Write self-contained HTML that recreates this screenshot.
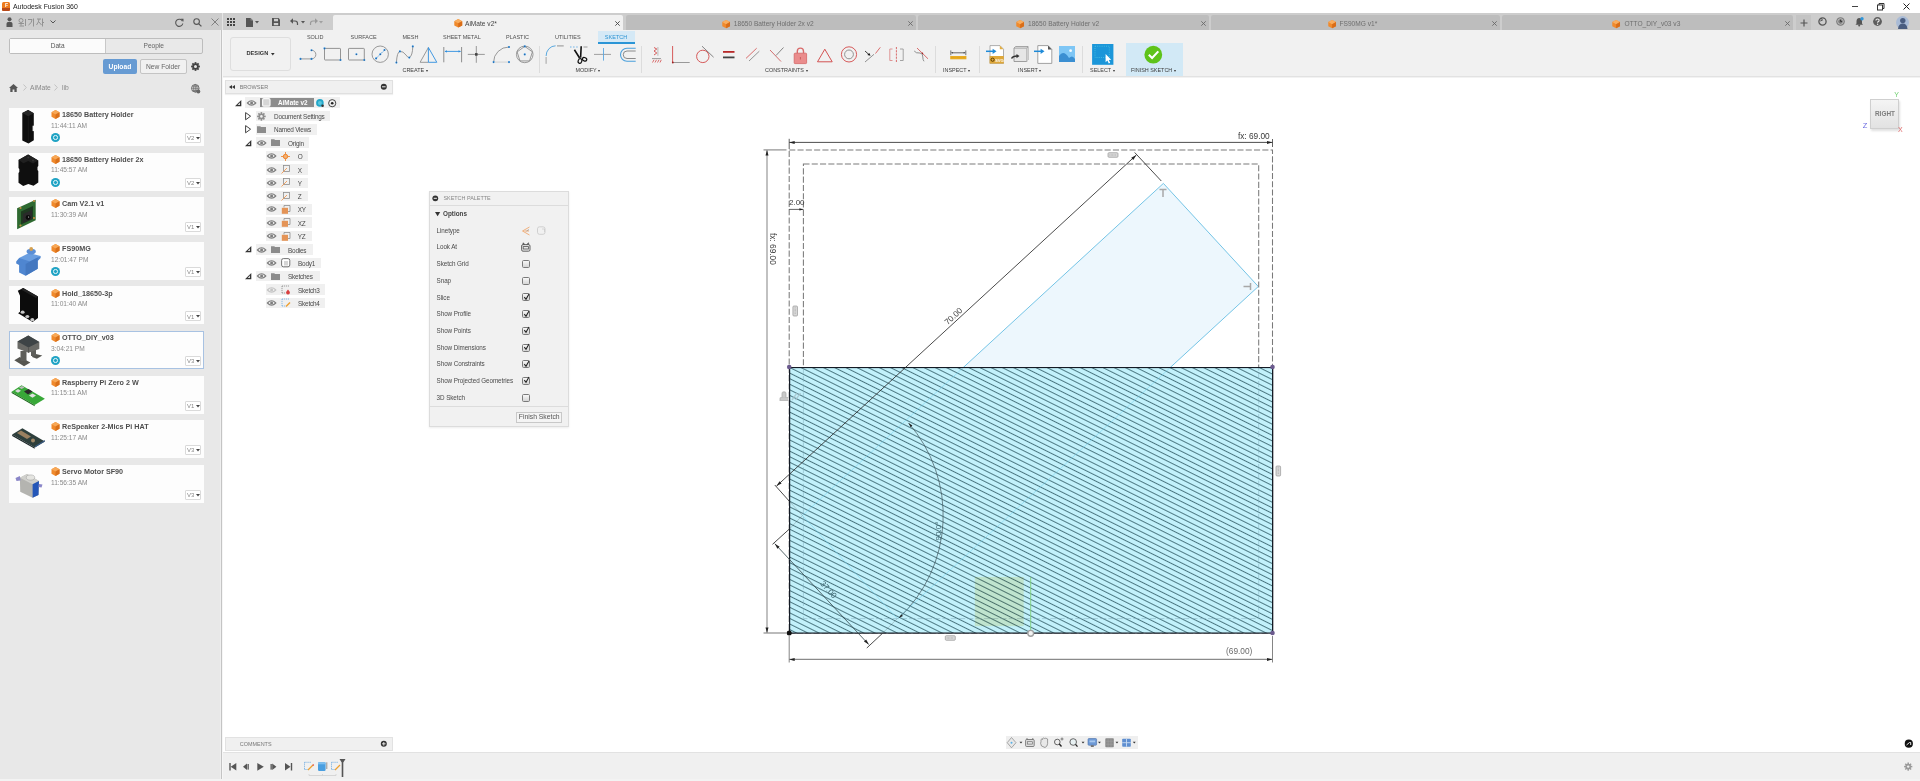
<!DOCTYPE html>
<html><head><meta charset="utf-8">
<style>
*{margin:0;padding:0;box-sizing:border-box}
html,body{width:1920px;height:781px;overflow:hidden;background:#fff;font-family:"Liberation Sans",sans-serif;color:#333}
.a{position:absolute}
.t{position:absolute;white-space:nowrap;line-height:1}
svg{position:absolute;overflow:visible}
</style></head><body>

<!-- title -->

<div class="a" style="left:0;top:0;width:1920px;height:13px;background:#fff"></div>
<div class="a" style="left:2px;top:2px;width:8px;height:9px;background:#ec7a1e;border-radius:1.5px"></div>
<div class="a" style="left:2px;top:8px;width:8px;height:3px;background:#b5481a;border-radius:0 0 1.5px 1.5px"></div>
<div class="t" style="left:5px;top:2.5px;font-size:5px;font-weight:700;color:#fff">F</div>
<div class="t" style="left:13px;top:3.8px;font-size:6.9px;color:#222">Autodesk Fusion 360</div>
<div class="a" style="left:1852px;top:5.5px;width:6px;height:1px;background:#444"></div>
<svg style="left:1877px;top:2.5px" width="8" height="8"><rect x="0.5" y="2" width="5" height="5" fill="none" stroke="#333" stroke-width="1"/><path d="M2,2 V0.5 H7 V5.5 H5.5" fill="none" stroke="#333" stroke-width="1"/></svg>
<svg style="left:1903px;top:2.5px" width="7" height="7"><path d="M0.5,0.5 L6.5,6.5 M6.5,0.5 L0.5,6.5" stroke="#222" stroke-width="1"/></svg>
<!-- header strip -->
<div class="a" style="left:0;top:13px;width:1920px;height:17px;background:#cdcdcd"></div>
<div class="a" style="left:0;top:30px;width:221px;height:751px;background:#e8e8e8"></div><div class="a" style="left:220px;top:30px;width:1px;height:749px;background:#efefef"></div>
<div class="a" style="left:221px;top:30px;width:1px;height:749px;background:#c4c4c4"></div><div class="a" style="left:222px;top:30px;width:1px;height:749px;background:#f6f6f6"></div>
<div class="a" style="left:223px;top:30px;width:1697px;height:46px;background:#f1f1f1"></div>
<div class="a" style="left:223px;top:76px;width:1697px;height:1px;background:#e2e2e2"></div><div class="a" style="left:223px;top:77px;width:1697px;height:1px;background:#f2f2f2"></div>
<div class="a" style="left:223px;top:752px;width:1697px;height:1px;background:#e2e2e2"></div>
<div class="a" style="left:223px;top:753px;width:1697px;height:28px;background:#f0f0f0"></div>

<!-- left -->

<!-- user -->
<svg style="left:6px;top:17px" width="7" height="10"><circle cx="3.5" cy="2.3" r="2" fill="#555"/><path d="M0.5,10 V7 Q0.5,4.8 3.5,4.8 Q6.5,4.8 6.5,7 V10 Z" fill="#555"/></svg>
<svg style="left:18px;top:17.5px" width="26" height="9" fill="none" stroke="#8c8c8c" stroke-width="0.9">
<circle cx="3" cy="2.5" r="2"/><path d="M0.5,5.5 H6 M3,5.5 V7.5 M1.5,8 H6"/><path d="M7.5,1 V8"/>
<path d="M10,1.5 H14 Q14,5 10.5,7 M15.5,0.5 V8.5"/>
<path d="M19,1 H23 M21,1 Q21,4 18.5,7 M21,4 L23.5,7 M24.5,0.5 V8.5 M24.5,4.5 H26"/>
</svg>
<svg style="left:49.5px;top:20px" width="6" height="4"><path d="M0.5,0.5 L3,3 L5.5,0.5" fill="none" stroke="#555" stroke-width="1"/></svg>
<svg style="left:175px;top:17.5px" width="9" height="9"><path d="M7.5,3.2 A3.6,3.6 0 1 0 7.8,5.5" fill="none" stroke="#555" stroke-width="1.1"/><polygon points="5.5,0.8 8.5,0.8 8.5,3.8" fill="#555"/></svg>
<svg style="left:193px;top:17.5px" width="9" height="9"><circle cx="3.6" cy="3.6" r="2.8" fill="none" stroke="#555" stroke-width="1.1"/><path d="M5.6,5.6 L8.4,8.4" stroke="#555" stroke-width="1.3"/></svg>
<svg style="left:211px;top:18px" width="8" height="8"><path d="M0.5,0.5 L7.5,7.5 M7.5,0.5 L0.5,7.5" stroke="#777" stroke-width="0.9"/></svg>

<!-- data/people -->
<div class="a" style="left:9px;top:38px;width:194px;height:15.5px;border:1px solid #bdbdbd;border-radius:2px;background:#e9e9e9"></div>
<div class="a" style="left:10px;top:39px;width:95.5px;height:13.5px;background:#fbfbfb;border-right:1px solid #c8c8c8"></div>
<div class="t" style="left:50.8px;top:43.3px;font-size:6.5px;color:#555">Data</div>
<div class="t" style="left:143.5px;top:43.3px;font-size:6.6px;color:#666">People</div>

<!-- buttons -->
<div class="a" style="left:102.5px;top:58.5px;width:34px;height:15.5px;background:#679bd3;border-radius:2px"></div>
<div class="t" style="left:108.6px;top:64px;font-size:6.7px;font-weight:700;color:#fff">Upload</div>
<div class="a" style="left:140px;top:58.5px;width:46.5px;height:15.5px;background:#f1f1f1;border:1px solid #c4c4c4;border-radius:2px"></div>
<div class="t" style="left:146px;top:64px;font-size:6.7px;color:#666">New Folder</div>
<svg style="left:190.5px;top:61.5px" width="9" height="9"><g transform="translate(4.5 4.5)"><circle r="3.2" fill="#444"/><g fill="#444"><rect x="-0.9" y="-4.4" width="1.8" height="8.8"/><rect x="-0.9" y="-4.4" width="1.8" height="8.8" transform="rotate(45)"/><rect x="-0.9" y="-4.4" width="1.8" height="8.8" transform="rotate(90)"/><rect x="-0.9" y="-4.4" width="1.8" height="8.8" transform="rotate(135)"/></g><circle r="1.5" fill="#e6e6e6"/></g></svg>

<!-- breadcrumb -->
<svg style="left:9px;top:83.5px" width="9" height="8"><polygon points="4.5,0 9,4 7.7,4 7.7,8 5.4,8 5.4,5.5 3.6,5.5 3.6,8 1.3,8 1.3,4 0,4" fill="#555"/></svg>
<svg style="left:23px;top:84px" width="4" height="7"><path d="M0.5,0.5 L3.3,3.5 L0.5,6.5" fill="none" stroke="#bdbdbd" stroke-width="0.9"/></svg>
<div class="t" style="left:30px;top:85.1px;font-size:6.7px;color:#888">AiMate</div>
<svg style="left:54px;top:84px" width="4" height="7"><path d="M0.5,0.5 L3.3,3.5 L0.5,6.5" fill="none" stroke="#bdbdbd" stroke-width="0.9"/></svg>
<div class="t" style="left:62px;top:85.1px;font-size:6.7px;color:#888">lib</div>
<svg style="left:191px;top:83.5px" width="10" height="10"><circle cx="4.3" cy="4.3" r="3.8" fill="none" stroke="#666" stroke-width="0.9"/><path d="M0.5,4.3 H8.1 M4.3,0.5 V8.1 M1.3,2.2 H7.3 M1.3,6.4 H7.3" stroke="#666" stroke-width="0.7" fill="none"/><ellipse cx="4.3" cy="4.3" rx="1.8" ry="3.8" fill="none" stroke="#666" stroke-width="0.7"/><circle cx="7.3" cy="7.5" r="2" fill="#666"/></svg>

<!-- cards -->
<div class="a" style="left:9px;top:107.9px;width:195px;height:38px;background:#fdfdfd;"></div>
<svg style="left:9px;top:107.9px" width="40" height="38"><polygon points="19.1,1.9 24.8,5.2 24.8,32.2 19.5,35.6 13.3,32.4 13.3,5.1" fill="#0e0e0e"/><polygon points="19.1,1.9 24.8,5.2 19.3,8.3 13.3,5.1" fill="#262626"/><rect x="23.6" y="17.7" width="1.4" height="5.4" fill="#f4f4f4"/><path d="M19.3,8.3 V35" stroke="#1c1c1c" stroke-width="0.8"/></svg>
<svg style="left:50.5px;top:110.2px" width="9" height="9"><polygon points="4.5,0 8.5,2.2 8.5,6.8 4.5,9 0.5,6.8 0.5,2.2" fill="#f08a2c"/><polygon points="0.5,2.2 4.5,4.4 8.5,2.2 4.5,0" fill="#f7a857"/><polygon points="4.5,4.4 8.5,2.2 8.5,6.8 4.5,9" fill="#d9701a"/></svg>
<div class="t" style="left:62px;top:111.1px;font-size:7.2px;font-weight:700;color:#4e4e4e">18650 Battery Holder</div>
<div class="t" style="left:51px;top:122.8px;font-size:6.6px;color:#8a8a8a">11:44:11 AM</div>
<div class="a" style="left:50.6px;top:133.2px;width:9.2px;height:9.2px;border-radius:50%;background:#1fa3c4"></div>
<div class="a" style="left:53px;top:135.4px;width:4.5px;height:4.5px;border:1px solid #e8f7fb;border-radius:50%"></div>
<div class="a" style="left:185px;top:132.9px;width:16px;height:10px;background:#fff;border:1px solid #dadada;border-radius:1px"></div>
<div class="t" style="left:187px;top:135.1px;font-size:6px;color:#888">V2</div>
<svg style="left:196px;top:136.9px" width="4" height="3"><polygon points="0,0 4,0 2,2.5" fill="#444"/></svg>
<div class="a" style="left:9px;top:152.5px;width:195px;height:38px;background:#fdfdfd;"></div>
<svg style="left:9px;top:152.5px" width="40" height="38"><polygon points="19.1,1.5 29.3,7.5 29.3,13 28.5,14 28.5,17 29.3,18 29.3,29.5 24.5,32.8 19.3,31 14.2,33 9.5,29.8 9.5,20 10.3,19 10.3,16 9.5,15 9.5,7.1" fill="#0f0f0f"/><polygon points="19.1,1.5 29.3,7.5 24,10.5 19.2,8 14.5,10.3 9.5,7.1" fill="#202020"/><circle cx="19.3" cy="4.5" r="1" fill="#333"/><circle cx="24" cy="7.5" r="1" fill="#333"/></svg>
<svg style="left:50.5px;top:154.8px" width="9" height="9"><polygon points="4.5,0 8.5,2.2 8.5,6.8 4.5,9 0.5,6.8 0.5,2.2" fill="#f08a2c"/><polygon points="0.5,2.2 4.5,4.4 8.5,2.2 4.5,0" fill="#f7a857"/><polygon points="4.5,4.4 8.5,2.2 8.5,6.8 4.5,9" fill="#d9701a"/></svg>
<div class="t" style="left:62px;top:155.7px;font-size:7.2px;font-weight:700;color:#4e4e4e">18650 Battery Holder 2x</div>
<div class="t" style="left:51px;top:167.4px;font-size:6.6px;color:#8a8a8a">11:45:57 AM</div>
<div class="a" style="left:50.6px;top:177.8px;width:9.2px;height:9.2px;border-radius:50%;background:#1fa3c4"></div>
<div class="a" style="left:53px;top:180.0px;width:4.5px;height:4.5px;border:1px solid #e8f7fb;border-radius:50%"></div>
<div class="a" style="left:185px;top:177.5px;width:16px;height:10px;background:#fff;border:1px solid #dadada;border-radius:1px"></div>
<div class="t" style="left:187px;top:179.7px;font-size:6px;color:#888">V2</div>
<svg style="left:196px;top:181.5px" width="4" height="3"><polygon points="0,0 4,0 2,2.5" fill="#444"/></svg>
<div class="a" style="left:9px;top:197.1px;width:195px;height:38px;background:#fdfdfd;"></div>
<svg style="left:9px;top:197.1px" width="40" height="38"><polygon points="8.1,11.3 26.7,2.7 26.7,23.2 8.1,32.3" fill="#2f6a31"/><polygon points="12,14.5 24,9 24,22 12,27.5" fill="#1e3a20"/><polygon points="14,17 23,13 23,22 14,26" fill="#2a2a2a"/><circle cx="19.1" cy="20.5" r="2.4" fill="#0b0b0b"/><circle cx="19.6" cy="20" r="0.6" fill="#ddd"/><circle cx="11.5" cy="11" r="1.1" fill="#c09040"/><circle cx="25" cy="4" r="1.1" fill="#c09040"/><circle cx="25" cy="21" r="1.1" fill="#c09040"/><circle cx="11.5" cy="28.5" r="1.1" fill="#c09040"/></svg>
<svg style="left:50.5px;top:199.4px" width="9" height="9"><polygon points="4.5,0 8.5,2.2 8.5,6.8 4.5,9 0.5,6.8 0.5,2.2" fill="#f08a2c"/><polygon points="0.5,2.2 4.5,4.4 8.5,2.2 4.5,0" fill="#f7a857"/><polygon points="4.5,4.4 8.5,2.2 8.5,6.8 4.5,9" fill="#d9701a"/></svg>
<div class="t" style="left:62px;top:200.3px;font-size:7.2px;font-weight:700;color:#4e4e4e">Cam V2.1 v1</div>
<div class="t" style="left:51px;top:212.0px;font-size:6.6px;color:#8a8a8a">11:30:39 AM</div>
<div class="a" style="left:185px;top:222.1px;width:16px;height:10px;background:#fff;border:1px solid #dadada;border-radius:1px"></div>
<div class="t" style="left:187px;top:224.3px;font-size:6px;color:#888">V1</div>
<svg style="left:196px;top:226.1px" width="4" height="3"><polygon points="0,0 4,0 2,2.5" fill="#444"/></svg>
<div class="a" style="left:9px;top:241.7px;width:195px;height:38px;background:#fdfdfd;"></div>
<svg style="left:9px;top:241.7px" width="40" height="38"><polygon points="10.1,16 31.6,13.9 31.6,16 28.7,19 28.7,26.8 16.6,33.8 10.1,30.6 10.1,23 7.2,21.5 7.2,19.5" fill="#4f86d0"/><polygon points="10.1,16 20,11 31.6,13.9 21,19.5" fill="#6a9ee0"/><polygon points="21,19.5 28.7,15.5 28.7,26.8 16.6,33.8 16.6,22" fill="#4478c0"/><ellipse cx="22.2" cy="9.6" rx="4.6" ry="2.8" fill="#5b8fd6"/><circle cx="22.2" cy="7" r="1.9" fill="#d4a050"/></svg>
<svg style="left:50.5px;top:244.0px" width="9" height="9"><polygon points="4.5,0 8.5,2.2 8.5,6.8 4.5,9 0.5,6.8 0.5,2.2" fill="#f08a2c"/><polygon points="0.5,2.2 4.5,4.4 8.5,2.2 4.5,0" fill="#f7a857"/><polygon points="4.5,4.4 8.5,2.2 8.5,6.8 4.5,9" fill="#d9701a"/></svg>
<div class="t" style="left:62px;top:244.9px;font-size:7.2px;font-weight:700;color:#4e4e4e">FS90MG</div>
<div class="t" style="left:51px;top:256.6px;font-size:6.6px;color:#8a8a8a">12:01:47 PM</div>
<div class="a" style="left:50.6px;top:267.0px;width:9.2px;height:9.2px;border-radius:50%;background:#1fa3c4"></div>
<div class="a" style="left:53px;top:269.2px;width:4.5px;height:4.5px;border:1px solid #e8f7fb;border-radius:50%"></div>
<div class="a" style="left:185px;top:266.7px;width:16px;height:10px;background:#fff;border:1px solid #dadada;border-radius:1px"></div>
<div class="t" style="left:187px;top:268.9px;font-size:6px;color:#888">V1</div>
<svg style="left:196px;top:270.7px" width="4" height="3"><polygon points="0,0 4,0 2,2.5" fill="#444"/></svg>
<div class="a" style="left:9px;top:286.3px;width:195px;height:38px;background:#fdfdfd;"></div>
<svg style="left:9px;top:286.3px" width="40" height="38"><polygon points="14.2,2 29,10.6 29,32.1 23.6,35.9 9.1,27.3 11,25.7 11,9.7 8.8,4.7" fill="#0c0c0c"/><polygon points="14.2,2 29,10.6 27,12 12,3.5" fill="#222"/><ellipse cx="13.6" cy="26.2" rx="2" ry="1.6" fill="#c8c8c8"/><ellipse cx="18.3" cy="30.5" rx="2" ry="1.6" fill="#c8c8c8"/><ellipse cx="23.3" cy="33.7" rx="2" ry="1.6" fill="#c8c8c8"/></svg>
<svg style="left:50.5px;top:288.6px" width="9" height="9"><polygon points="4.5,0 8.5,2.2 8.5,6.8 4.5,9 0.5,6.8 0.5,2.2" fill="#f08a2c"/><polygon points="0.5,2.2 4.5,4.4 8.5,2.2 4.5,0" fill="#f7a857"/><polygon points="4.5,4.4 8.5,2.2 8.5,6.8 4.5,9" fill="#d9701a"/></svg>
<div class="t" style="left:62px;top:289.5px;font-size:7.2px;font-weight:700;color:#4e4e4e">Hold_18650-3p</div>
<div class="t" style="left:51px;top:301.2px;font-size:6.6px;color:#8a8a8a">11:01:40 AM</div>
<div class="a" style="left:185px;top:311.3px;width:16px;height:10px;background:#fff;border:1px solid #dadada;border-radius:1px"></div>
<div class="t" style="left:187px;top:313.5px;font-size:6px;color:#888">V1</div>
<svg style="left:196px;top:315.3px" width="4" height="3"><polygon points="0,0 4,0 2,2.5" fill="#444"/></svg>
<div class="a" style="left:9px;top:330.9px;width:195px;height:38px;background:#fdfdfd;border:1px solid #a8c2e2;"></div>
<svg style="left:9px;top:330.9px" width="40" height="38"><polygon points="5.3,29.3 10.7,26.1 21.4,31.4 15,35.2" fill="#555550"/><polygon points="23.6,22.3 33.3,24.4 27.9,27.7 23.1,26.1" fill="#555550"/><rect x="11.5" y="20" width="6" height="10" fill="#5e5e5a"/><rect x="22" y="18" width="5" height="7" fill="#5e5e5a"/><polygon points="19.3,4.6 30.3,11 30.3,18.1 19.5,21.8 8.5,17.5 8.5,10.5" fill="#6a6a66"/><polygon points="19.3,4.6 30.3,11 19.5,16.5 8.5,10.5" fill="#3e4446"/><path d="M19.5,16.5 V21.8" stroke="#4a4a48" stroke-width="0.7"/></svg>
<svg style="left:50.5px;top:333.2px" width="9" height="9"><polygon points="4.5,0 8.5,2.2 8.5,6.8 4.5,9 0.5,6.8 0.5,2.2" fill="#f08a2c"/><polygon points="0.5,2.2 4.5,4.4 8.5,2.2 4.5,0" fill="#f7a857"/><polygon points="4.5,4.4 8.5,2.2 8.5,6.8 4.5,9" fill="#d9701a"/></svg>
<div class="t" style="left:62px;top:334.1px;font-size:7.2px;font-weight:700;color:#4e4e4e">OTTO_DIY_v03</div>
<div class="t" style="left:51px;top:345.8px;font-size:6.6px;color:#8a8a8a">3:04:21 PM</div>
<div class="a" style="left:50.6px;top:356.2px;width:9.2px;height:9.2px;border-radius:50%;background:#1fa3c4"></div>
<div class="a" style="left:53px;top:358.4px;width:4.5px;height:4.5px;border:1px solid #e8f7fb;border-radius:50%"></div>
<div class="a" style="left:185px;top:355.9px;width:16px;height:10px;background:#fff;border:1px solid #dadada;border-radius:1px"></div>
<div class="t" style="left:187px;top:358.1px;font-size:6px;color:#888">V3</div>
<svg style="left:196px;top:359.9px" width="4" height="3"><polygon points="0,0 4,0 2,2.5" fill="#444"/></svg>
<div class="a" style="left:9px;top:375.5px;width:195px;height:38px;background:#fdfdfd;"></div>
<svg style="left:9px;top:375.5px" width="40" height="38"><polygon points="2.6,15.7 12.6,9.3 35.9,22.7 25.7,29.1" fill="#38a838"/><polygon points="2.6,15.7 25.7,29.1 25.7,30.3 2.6,16.9" fill="#1e6a1e"/><polygon points="15,15.5 19.5,13 23.5,15.5 19,18.5" fill="#2a2a2a"/><polygon points="20,19.5 23.5,17.5 27,19.5 23.5,21.7" fill="#e0e0e0"/><polygon points="6,15 9,13 12,14.8 9,16.8" fill="#d8d8d8"/><polygon points="10,11.5 13,10 15.5,11.5 12.5,13" fill="#bbb"/></svg>
<svg style="left:50.5px;top:377.8px" width="9" height="9"><polygon points="4.5,0 8.5,2.2 8.5,6.8 4.5,9 0.5,6.8 0.5,2.2" fill="#f08a2c"/><polygon points="0.5,2.2 4.5,4.4 8.5,2.2 4.5,0" fill="#f7a857"/><polygon points="4.5,4.4 8.5,2.2 8.5,6.8 4.5,9" fill="#d9701a"/></svg>
<div class="t" style="left:62px;top:378.7px;font-size:7.2px;font-weight:700;color:#4e4e4e">Raspberry Pi Zero 2 W</div>
<div class="t" style="left:51px;top:390.4px;font-size:6.6px;color:#8a8a8a">11:15:11 AM</div>
<div class="a" style="left:185px;top:400.5px;width:16px;height:10px;background:#fff;border:1px solid #dadada;border-radius:1px"></div>
<div class="t" style="left:187px;top:402.7px;font-size:6px;color:#888">V1</div>
<svg style="left:196px;top:404.5px" width="4" height="3"><polygon points="0,0 4,0 2,2.5" fill="#444"/></svg>
<div class="a" style="left:9px;top:420.1px;width:195px;height:38px;background:#fdfdfd;"></div>
<svg style="left:9px;top:420.1px" width="40" height="38"><polygon points="3.2,14.5 13.4,8.3 35.9,21.5 25.7,27.4" fill="#2e3f3c"/><polygon points="3.2,14.5 25.7,27.4 25.7,28.8 3.2,15.9" fill="#1a2628"/><polygon points="8,13 12,10.5 22,16.5 18,19" fill="#9a8060"/><circle cx="24" cy="20.5" r="2" fill="#a08868"/><polygon points="26,26 35.9,20 35.9,21.5 26,27.5" fill="#3a5a80"/></svg>
<svg style="left:50.5px;top:422.4px" width="9" height="9"><polygon points="4.5,0 8.5,2.2 8.5,6.8 4.5,9 0.5,6.8 0.5,2.2" fill="#f08a2c"/><polygon points="0.5,2.2 4.5,4.4 8.5,2.2 4.5,0" fill="#f7a857"/><polygon points="4.5,4.4 8.5,2.2 8.5,6.8 4.5,9" fill="#d9701a"/></svg>
<div class="t" style="left:62px;top:423.3px;font-size:7.2px;font-weight:700;color:#4e4e4e">ReSpeaker 2-Mics Pi HAT</div>
<div class="t" style="left:51px;top:435.0px;font-size:6.6px;color:#8a8a8a">11:25:17 AM</div>
<div class="a" style="left:185px;top:445.1px;width:16px;height:10px;background:#fff;border:1px solid #dadada;border-radius:1px"></div>
<div class="t" style="left:187px;top:447.3px;font-size:6px;color:#888">V3</div>
<svg style="left:196px;top:449.1px" width="4" height="3"><polygon points="0,0 4,0 2,2.5" fill="#444"/></svg>
<div class="a" style="left:9px;top:464.7px;width:195px;height:38px;background:#fdfdfd;"></div>
<svg style="left:9px;top:464.7px" width="40" height="38"><polygon points="10.9,12.8 18,9 30,16 29.5,30 23.6,32.7 11.2,26.8" fill="#b4b4b0"/><polygon points="10.9,12.8 18,9 30,16 23.6,19.2" fill="#d0d0cc"/><polygon points="23.6,19.2 30,16 29.5,30 23.6,32.7" fill="#2456b8"/><ellipse cx="21.5" cy="12.5" rx="4.2" ry="2.6" fill="#e4e4e0" stroke="#999" stroke-width="0.5"/><polygon points="6.5,13 10.9,11 11.5,15.5 7.5,16" fill="#8a86c8"/><polygon points="30,19 33.5,19.5 32.5,22.5 29.5,22" fill="#8a86c8"/></svg>
<svg style="left:50.5px;top:467.0px" width="9" height="9"><polygon points="4.5,0 8.5,2.2 8.5,6.8 4.5,9 0.5,6.8 0.5,2.2" fill="#f08a2c"/><polygon points="0.5,2.2 4.5,4.4 8.5,2.2 4.5,0" fill="#f7a857"/><polygon points="4.5,4.4 8.5,2.2 8.5,6.8 4.5,9" fill="#d9701a"/></svg>
<div class="t" style="left:62px;top:467.9px;font-size:7.2px;font-weight:700;color:#4e4e4e">Servo Motor SF90</div>
<div class="t" style="left:51px;top:479.6px;font-size:6.6px;color:#8a8a8a">11:56:35 AM</div>
<div class="a" style="left:185px;top:489.7px;width:16px;height:10px;background:#fff;border:1px solid #dadada;border-radius:1px"></div>
<div class="t" style="left:187px;top:491.9px;font-size:6px;color:#888">V3</div>
<svg style="left:196px;top:493.7px" width="4" height="3"><polygon points="0,0 4,0 2,2.5" fill="#444"/></svg>
<!-- tabs -->

<div class="a" style="left:222px;top:13px;width:1px;height:17px;background:#e4e4e4"></div>
<svg style="left:227px;top:18px" width="8" height="8"><g fill="#444"><rect x="0" y="0" width="2" height="2"/><rect x="3" y="0" width="2" height="2"/><rect x="6" y="0" width="2" height="2"/><rect x="0" y="3" width="2" height="2"/><rect x="3" y="3" width="2" height="2"/><rect x="6" y="3" width="2" height="2"/><rect x="0" y="6" width="2" height="2"/><rect x="3" y="6" width="2" height="2"/><rect x="6" y="6" width="2" height="2"/></g></svg>
<svg style="left:246px;top:17.5px" width="7" height="9"><polygon points="0,0 4.5,0 7,2.5 7,9 0,9" fill="#555"/><polygon points="4.5,0 7,2.5 4.5,2.5" fill="#888"/></svg>
<svg style="left:254.5px;top:20.5px" width="4" height="3"><polygon points="0,0 4,0 2,2.5" fill="#555"/></svg>
<svg style="left:271.5px;top:17.5px" width="8" height="8"><path d="M0,0 H6.5 L8,1.5 V8 H0 Z" fill="#555"/><rect x="2" y="0.8" width="4" height="2.5" fill="#cfcfcf"/><rect x="1.8" y="5" width="4.4" height="2.2" fill="#cfcfcf"/></svg>
<svg style="left:290px;top:18px" width="8" height="7"><path d="M1,3 H5 Q7.5,3 7.5,5.5 V7" fill="none" stroke="#555" stroke-width="1.2"/><polygon points="0,3 3,0.3 3,5.7" fill="#555"/></svg>
<svg style="left:300.5px;top:20.5px" width="4" height="3"><polygon points="0,0 4,0 2,2.5" fill="#555"/></svg>
<svg style="left:309.5px;top:18px" width="8" height="7"><path d="M7,3 H3 Q0.5,3 0.5,5.5 V7" fill="none" stroke="#9a9a9a" stroke-width="1.2"/><polygon points="8,3 5,0.3 5,5.7" fill="#9a9a9a"/></svg>
<svg style="left:319px;top:20.5px" width="4" height="3"><polygon points="0,0 4,0 2,2.5" fill="#a0a0a0"/></svg>

<div class="a" style="left:333px;top:14.8px;width:290px;height:15.5px;background:#f1f1f1;border-radius:2px 2px 0 0"></div>
<svg style="left:453.8px;top:19.3px" width="8.5" height="8.5" viewBox="0 0 9 9"><polygon points="4.5,0 8.7,2.3 8.7,6.8 4.5,9 0.3,6.8 0.3,2.3" fill="#f08a2c"/><polygon points="0.3,2.3 4.5,4.5 8.7,2.3 4.5,0" fill="#f8ad5f"/><polygon points="4.5,4.5 8.7,2.3 8.7,6.8 4.5,9" fill="#d96d18"/></svg>
<div class="t" style="left:465px;top:20.6px;font-size:6.6px;color:#444">AiMate v2*</div>
<svg style="left:615px;top:20.5px" width="5" height="5"><path d="M0.3,0.3 L4.7,4.7 M4.7,0.3 L0.3,4.7" stroke="#444" stroke-width="0.9"/></svg>
<div class="a" style="left:626px;top:15px;width:290px;height:15.3px;background:#bdbdbd;border-radius:2px 2px 0 0"></div>
<svg style="left:721.8px;top:19.6px" width="8.3" height="8.3" viewBox="0 0 9 9"><polygon points="4.5,0 8.7,2.3 8.7,6.8 4.5,9 0.3,6.8 0.3,2.3" fill="#f08a2c"/><polygon points="0.3,2.3 4.5,4.5 8.7,2.3 4.5,0" fill="#f8ad5f"/><polygon points="4.5,4.5 8.7,2.3 8.7,6.8 4.5,9" fill="#d96d18"/></svg>
<div class="t" style="left:733.8px;top:20.6px;font-size:6.6px;color:#6e6e6e">18650 Battery Holder 2x v2</div>
<svg style="left:907.5px;top:20.5px" width="5" height="5"><path d="M0.3,0.3 L4.7,4.7 M4.7,0.3 L0.3,4.7" stroke="#6a6a6a" stroke-width="0.9"/></svg>
<div class="a" style="left:918px;top:15px;width:291px;height:15.3px;background:#bdbdbd;border-radius:2px 2px 0 0"></div>
<svg style="left:1016px;top:19.6px" width="8.3" height="8.3" viewBox="0 0 9 9"><polygon points="4.5,0 8.7,2.3 8.7,6.8 4.5,9 0.3,6.8 0.3,2.3" fill="#f08a2c"/><polygon points="0.3,2.3 4.5,4.5 8.7,2.3 4.5,0" fill="#f8ad5f"/><polygon points="4.5,4.5 8.7,2.3 8.7,6.8 4.5,9" fill="#d96d18"/></svg>
<div class="t" style="left:1028px;top:20.6px;font-size:6.6px;color:#6e6e6e">18650 Battery Holder v2</div>
<svg style="left:1200.5px;top:20.5px" width="5" height="5"><path d="M0.3,0.3 L4.7,4.7 M4.7,0.3 L0.3,4.7" stroke="#6a6a6a" stroke-width="0.9"/></svg>
<div class="a" style="left:1211px;top:15px;width:289px;height:15.3px;background:#bdbdbd;border-radius:2px 2px 0 0"></div>
<svg style="left:1327.5px;top:19.6px" width="8.3" height="8.3" viewBox="0 0 9 9"><polygon points="4.5,0 8.7,2.3 8.7,6.8 4.5,9 0.3,6.8 0.3,2.3" fill="#f08a2c"/><polygon points="0.3,2.3 4.5,4.5 8.7,2.3 4.5,0" fill="#f8ad5f"/><polygon points="4.5,4.5 8.7,2.3 8.7,6.8 4.5,9" fill="#d96d18"/></svg>
<div class="t" style="left:1339.5px;top:20.6px;font-size:6.6px;color:#6e6e6e">FS90MG v1*</div>
<svg style="left:1491.5px;top:20.5px" width="5" height="5"><path d="M0.3,0.3 L4.7,4.7 M4.7,0.3 L0.3,4.7" stroke="#6a6a6a" stroke-width="0.9"/></svg>
<div class="a" style="left:1502px;top:15px;width:291px;height:15.3px;background:#bdbdbd;border-radius:2px 2px 0 0"></div>
<svg style="left:1612.4px;top:19.6px" width="8.3" height="8.3" viewBox="0 0 9 9"><polygon points="4.5,0 8.7,2.3 8.7,6.8 4.5,9 0.3,6.8 0.3,2.3" fill="#f08a2c"/><polygon points="0.3,2.3 4.5,4.5 8.7,2.3 4.5,0" fill="#f8ad5f"/><polygon points="4.5,4.5 8.7,2.3 8.7,6.8 4.5,9" fill="#d96d18"/></svg>
<div class="t" style="left:1624.4px;top:20.6px;font-size:6.6px;color:#6e6e6e">OTTO_DIY_v03 v3</div>
<svg style="left:1784.5px;top:20.5px" width="5" height="5"><path d="M0.3,0.3 L4.7,4.7 M4.7,0.3 L0.3,4.7" stroke="#6a6a6a" stroke-width="0.9"/></svg>

<div class="a" style="left:1796px;top:15px;width:15px;height:15.3px;background:#c4c4c4"></div>
<svg style="left:1799.5px;top:18.5px" width="8" height="8"><path d="M4,0.5 V7.5 M0.5,4 H7.5" stroke="#555" stroke-width="1.2"/></svg>
<svg style="left:1817.5px;top:17.3px" width="9" height="9"><circle cx="4.5" cy="4.5" r="3.6" fill="none" stroke="#555" stroke-width="1.3"/><path d="M3,1 L4.5,3.2 L2.2,4" stroke="#555" stroke-width="1" fill="none"/></svg>
<svg style="left:1836px;top:17.3px" width="9" height="9"><circle cx="4.5" cy="4.5" r="4.3" fill="#7a7a7a"/><circle cx="4.5" cy="4.5" r="2.8" fill="none" stroke="#cfcfcf" stroke-width="0.8"/><path d="M4.5,2.8 V4.5 H6" stroke="#3a3a3a" stroke-width="1" fill="none"/></svg>
<svg style="left:1855px;top:17.3px" width="9" height="10"><path d="M4.2,1 Q1.5,1 1.5,4.5 V6.5 L0.5,7.8 H8 L7,6.5 V4.5 Q7,1 4.2,1 Z" fill="#555"/><circle cx="4.2" cy="8.6" r="1" fill="#555"/><circle cx="7" cy="1.8" r="1.7" fill="#2f95d8"/></svg>
<svg style="left:1873px;top:17.3px" width="9" height="9"><circle cx="4.5" cy="4.5" r="4.4" fill="#5e5e5e"/><path d="M2.9,3.5 Q2.9,2 4.5,2 Q6.1,2 6.1,3.4 Q6.1,4.4 4.7,5 V5.8" fill="none" stroke="#eee" stroke-width="1.1"/><circle cx="4.6" cy="7.2" r="0.7" fill="#eee"/></svg>
<div class="a" style="left:1896px;top:15.7px;width:13px;height:13px;border-radius:50%;background:#a9bbd6;overflow:hidden"></div>
<svg style="left:1896px;top:15.7px" width="13" height="13"><circle cx="6.8" cy="4.6" r="2.7" fill="#4a5d80"/><path d="M2,13 Q2.5,7.5 6.8,7.5 Q11,7.5 11.5,13 Z" fill="#4a5d80"/></svg>

<!-- toolbar -->
<div class="a" style="left:229.5px;top:36.5px;width:61px;height:34px;border:1px solid #dedede;border-radius:3px;background:#f1f1f1"></div>
<div class="t" style="left:246.5px;top:50.5px;font-size:5.6px;font-weight:700;color:#333;letter-spacing:0.05px">DESIGN</div>
<svg style="left:270.5px;top:52.5px" width="4" height="3"><polygon points="0,0 3.6,0 1.8,2.4" fill="#333"/></svg>
<div class="t" style="left:306.9px;top:35.1px;font-size:5.5px;color:#505050">SOLID</div>
<div class="t" style="left:350.6px;top:35.1px;font-size:5.5px;color:#505050">SURFACE</div>
<div class="t" style="left:402.5px;top:35.1px;font-size:5.5px;color:#505050">MESH</div>
<div class="t" style="left:443px;top:35.1px;font-size:5.5px;color:#505050">SHEET METAL</div>
<div class="t" style="left:506px;top:35.1px;font-size:5.5px;color:#505050">PLASTIC</div>
<div class="t" style="left:555px;top:35.1px;font-size:5.5px;color:#505050">UTILITIES</div>
<div class="a" style="left:598px;top:30.6px;width:36.8px;height:13px;background:#d5e9f6"></div>
<div class="a" style="left:598px;top:42px;width:36.8px;height:1.6px;background:#2b95d6"></div>
<div class="t" style="left:604.8px;top:35.1px;font-size:5.55px;color:#2c93d3">SKETCH</div>
<div class="a" style="left:1125.5px;top:43px;width:57.5px;height:32.7px;background:#d2e9f6"></div>
<div class="t" style="left:402.5px;top:68.1px;font-size:5.45px;color:#3c3c3c" id="gl_CREATE">CREATE<span style="display:inline-block;width:0;height:0;border-left:1.9px solid transparent;border-right:1.9px solid transparent;border-top:2.6px solid #333;margin-left:1.6px;vertical-align:0.5px"></span></div>
<div class="t" style="left:575.6px;top:68.1px;font-size:5.45px;color:#3c3c3c" id="gl_MODIFY">MODIFY<span style="display:inline-block;width:0;height:0;border-left:1.9px solid transparent;border-right:1.9px solid transparent;border-top:2.6px solid #333;margin-left:1.6px;vertical-align:0.5px"></span></div>
<div class="t" style="left:765px;top:68.1px;font-size:5.45px;color:#3c3c3c" id="gl_CONSTRAINTS">CONSTRAINTS<span style="display:inline-block;width:0;height:0;border-left:1.9px solid transparent;border-right:1.9px solid transparent;border-top:2.6px solid #333;margin-left:1.6px;vertical-align:0.5px"></span></div>
<div class="t" style="left:943px;top:68.1px;font-size:5.45px;color:#3c3c3c" id="gl_INSPECT">INSPECT<span style="display:inline-block;width:0;height:0;border-left:1.9px solid transparent;border-right:1.9px solid transparent;border-top:2.6px solid #333;margin-left:1.6px;vertical-align:0.5px"></span></div>
<div class="t" style="left:1018px;top:68.1px;font-size:5.45px;color:#3c3c3c" id="gl_INSERT">INSERT<span style="display:inline-block;width:0;height:0;border-left:1.9px solid transparent;border-right:1.9px solid transparent;border-top:2.6px solid #333;margin-left:1.6px;vertical-align:0.5px"></span></div>
<div class="t" style="left:1090px;top:68.1px;font-size:5.45px;color:#3c3c3c" id="gl_SELECT">SELECT<span style="display:inline-block;width:0;height:0;border-left:1.9px solid transparent;border-right:1.9px solid transparent;border-top:2.6px solid #333;margin-left:1.6px;vertical-align:0.5px"></span></div>
<div class="t" style="left:1130.9px;top:68.1px;font-size:5.45px;color:#3c3c3c" id="gl_FINISH_SKETCH">FINISH SKETCH<span style="display:inline-block;width:0;height:0;border-left:1.9px solid transparent;border-right:1.9px solid transparent;border-top:2.6px solid #333;margin-left:1.6px;vertical-align:0.5px"></span></div>
<div class="a" style="left:538.9px;top:46px;width:1px;height:27px;background:#dcdcdc"></div>
<div class="a" style="left:640.5px;top:46px;width:1px;height:27px;background:#dcdcdc"></div>
<div class="a" style="left:935.1px;top:46px;width:1px;height:27px;background:#dcdcdc"></div>
<div class="a" style="left:978.9px;top:46px;width:1px;height:27px;background:#dcdcdc"></div>
<div class="a" style="left:1081.5px;top:46px;width:1px;height:27px;background:#dcdcdc"></div>
<svg style="left:0;top:0" width="1920" height="80"><path d="M300.5,58.9 H311.5 A4.35,4.35 0 0 0 311.5,50.2" fill="none" stroke="#8e8e8e" stroke-width="0.9"/><circle cx="300.5" cy="58.9" r="1.05" fill="#2f8fe0"/><circle cx="300.5" cy="58.9" r="0.45" fill="#235"/><circle cx="311.5" cy="58.9" r="1.05" fill="#2f8fe0"/><circle cx="311.5" cy="58.9" r="0.45" fill="#235"/><circle cx="311.5" cy="50.2" r="1.05" fill="#2f8fe0"/><circle cx="311.5" cy="50.2" r="0.45" fill="#235"/><rect x="324.5" y="48.4" width="16" height="11.6" rx="0.6" fill="none" stroke="#8e8e8e" stroke-width="0.95"/><circle cx="324.5" cy="48.4" r="1.05" fill="#2f8fe0"/><circle cx="324.5" cy="48.4" r="0.45" fill="#235"/><circle cx="340.5" cy="60" r="1.05" fill="#2f8fe0"/><circle cx="340.5" cy="60" r="0.45" fill="#235"/><rect x="348.5" y="48.4" width="15.8" height="11.6" rx="0.6" fill="none" stroke="#8e8e8e" stroke-width="0.95"/><circle cx="356.4" cy="54.3" r="1.05" fill="#2f8fe0"/><circle cx="356.4" cy="54.3" r="0.45" fill="#235"/><circle cx="364.3" cy="60" r="1.05" fill="#2f8fe0"/><circle cx="364.3" cy="60" r="0.45" fill="#235"/><circle cx="380.2" cy="54.2" r="8.2" fill="none" stroke="#8e8e8e" stroke-width="0.9"/><path d="M376.1,58.4 L384.5,50" stroke="#2f8fe0" stroke-width="0.9" stroke-dasharray="1.6 1"/><circle cx="376.1" cy="58.4" r="1.05" fill="#2f8fe0"/><circle cx="376.1" cy="58.4" r="0.45" fill="#235"/><circle cx="380.3" cy="54.2" r="1.05" fill="#2f8fe0"/><circle cx="380.3" cy="54.2" r="0.45" fill="#235"/><circle cx="384.5" cy="50" r="1.05" fill="#2f8fe0"/><circle cx="384.5" cy="50" r="0.45" fill="#235"/><path d="M396.4,62.6 Q397,52 399.9,51.4 Q403,51 406,55 Q408,58 409.3,57.6 Q412.5,56 412.8,46.4" fill="none" stroke="#8e8e8e" stroke-width="0.9"/><circle cx="396.4" cy="62.6" r="1.05" fill="#2f8fe0"/><circle cx="396.4" cy="62.6" r="0.45" fill="#235"/><circle cx="399.9" cy="51.4" r="1.05" fill="#2f8fe0"/><circle cx="399.9" cy="51.4" r="0.45" fill="#235"/><circle cx="409.3" cy="57.6" r="1.05" fill="#2f8fe0"/><circle cx="409.3" cy="57.6" r="0.45" fill="#235"/><circle cx="412.8" cy="46.4" r="1.05" fill="#2f8fe0"/><circle cx="412.8" cy="46.4" r="0.45" fill="#235"/><path d="M428.4,47.5 L420.1,62.3 H428.4" fill="none" stroke="#8e8e8e" stroke-width="0.9"/><path d="M428.4,47.5 L436.8,62.3 H428.4 Z" fill="none" stroke="#2f8fe0" stroke-width="0.9"/><path d="M443.8,47 V62.3 M461.6,47 V62.3" stroke="#8e8e8e" stroke-width="1"/><path d="M445,51.4 H460.4" stroke="#2f8fe0" stroke-width="0.9"/><polygon points="444.5,51.4 447,50.2 447,52.6" fill="#2f8fe0"/><polygon points="461,51.4 458.5,50.2 458.5,52.6" fill="#2f8fe0"/><path d="M467.8,54.4 H484.8 M476.3,46 V62.8" stroke="#8e8e8e" stroke-width="0.9"/><rect x="475" y="53.1" width="2.6" height="2.6" fill="#444"/><path d="M493.6,62.1 A15.4,15.1 0 0 1 509,47" fill="none" stroke="#8e8e8e" stroke-width="0.9"/><path d="M494.5,62.1 H508" stroke="#c8c8c8" stroke-width="0.8"/><circle cx="493.6" cy="62.1" r="1.05" fill="#2f8fe0"/><circle cx="493.6" cy="62.1" r="0.45" fill="#235"/><circle cx="509" cy="47" r="1.05" fill="#2f8fe0"/><circle cx="509" cy="47" r="0.45" fill="#235"/><circle cx="509" cy="62.1" r="1.05" fill="#2f8fe0"/><circle cx="509" cy="62.1" r="0.45" fill="#235"/><circle cx="524.75" cy="54.4" r="8.3" fill="none" stroke="#8e8e8e" stroke-width="0.9"/><polygon points="524.75,46.4 532.4,51.9 529.5,60.9 520,60.9 517.1,51.9" fill="none" stroke="#8e8e8e" stroke-width="0.9"/><circle cx="524.75" cy="46.4" r="1.05" fill="#2f8fe0"/><circle cx="524.75" cy="46.4" r="0.45" fill="#235"/><circle cx="524.75" cy="54.4" r="1.05" fill="#2f8fe0"/><circle cx="524.75" cy="54.4" r="0.45" fill="#235"/><path d="M546.1,57 V63.8" stroke="#9a9a9a" stroke-width="0.9"/><path d="M546.1,56 A9.5,10.2 0 0 1 555.6,45.8" fill="none" stroke="#4aa0dc" stroke-width="0.9"/><path d="M557,45.9 H563.7" stroke="#9a9a9a" stroke-width="1.1"/><path d="M570,47 H578" stroke="#6fb3e8" stroke-width="1" stroke-dasharray="1.5 1.6"/><path d="M583.5,47 H587.5" stroke="#9a9a9a" stroke-width="1"/><path d="M574.4,49.8 L579.6,58 M581.2,46.3 L580.6,57.8" stroke="#111" stroke-width="1.6"/><ellipse cx="580" cy="61" rx="1.8" ry="2.4" fill="none" stroke="#111" stroke-width="1.2" transform="rotate(20 580 61)"/><ellipse cx="584.6" cy="59.3" rx="2.2" ry="1.7" fill="none" stroke="#111" stroke-width="1.2" transform="rotate(20 584.6 59.3)"/><path d="M594,54.4 H611" stroke="#8a8a8a" stroke-width="0.8"/><path d="M603.5,48 V60.6" stroke="#5aa6e0" stroke-width="0.9"/><path d="M635.7,48.3 H627 A6.5,6.5 0 0 0 627,61.3 H635.7" fill="none" stroke="#4aa0dc" stroke-width="1.1"/><path d="M635.7,51 H627 A3.7,3.7 0 0 0 627,58.5 H635.7" fill="none" stroke="#8a8a8a" stroke-width="1"/><path d="M654,47.5 L656.8,49 L654,51 L656.8,53 L654,55" fill="none" stroke="#d24a4a" stroke-width="0.9"/><path d="M657.9,47 V55.8" stroke="#bbb" stroke-width="1"/><path d="M652,58.6 H661" stroke="#9a9a9a" stroke-width="1"/><path d="M652.5,62.5 L654,59.8 M655,62.5 L656.5,59.8 M657.5,62.5 L659,59.8 M660,62.5 L661.3,59.8" stroke="#d24a4a" stroke-width="0.8"/><path d="M672.6,46 V62.5" stroke="#d24a4a" stroke-width="0.9"/><path d="M673,62.5 H689.7" stroke="#999" stroke-width="1"/><circle cx="672.8" cy="62.5" r="0.9" fill="#a02020"/><circle cx="702.8" cy="56.4" r="6.2" fill="none" stroke="#d24a4a" stroke-width="0.9"/><path d="M702,46.2 L713.6,57.2" stroke="#777" stroke-width="0.9"/><path d="M723,51.9 H734.5" stroke="#b82a2a" stroke-width="1.8"/><path d="M723,57.4 H734.5" stroke="#444" stroke-width="1.8"/><path d="M746,58.4 L756.7,48.2" stroke="#d24a4a" stroke-width="0.8"/><path d="M749,61 L759.3,51.2" stroke="#888" stroke-width="0.9"/><path d="M770,50 L781,61.5" stroke="#cf6060" stroke-width="0.9"/><path d="M776,55.5 L783.5,47.5" stroke="#777" stroke-width="0.9"/><path d="M797.3,53.5 V51.2 A3.1,3.1 0 0 1 803.5,51.2 V53.5" fill="none" stroke="#d96b6b" stroke-width="1.4"/><rect x="794.2" y="53.2" width="12.4" height="10.4" rx="0.8" fill="#ea8c8c" stroke="#d46464" stroke-width="0.8"/><path d="M800.4,57 V59.5" stroke="#b04040" stroke-width="0.6"/><polygon points="824.8,49.2 817.5,61.8 832.2,61.8" fill="none" stroke="#d24a4a" stroke-width="0.95"/><circle cx="849" cy="54.4" r="7.6" fill="none" stroke="#d24a4a" stroke-width="0.9"/><circle cx="849" cy="54.4" r="4.4" fill="none" stroke="#888" stroke-width="0.9"/><path d="M865,62 L874,54.3" stroke="#777" stroke-width="0.8"/><path d="M875.5,53.5 L880.3,47.3" stroke="#d24a4a" stroke-width="0.8"/><path d="M865,51 L869,54.6" stroke="#111" stroke-width="0.8"/><polygon points="870.5,55.7 867.4,55.1 869.3,53" fill="#111"/><path d="M892.5,49 H889.8 V60.5 H892.5" fill="none" stroke="#dc8a8a" stroke-width="0.9"/><path d="M896.4,47 V62" stroke="#d24a4a" stroke-width="0.8" stroke-dasharray="2.2 1"/><path d="M900,49 H903.2 V60.5 H900" fill="none" stroke="#9a9a9a" stroke-width="0.9"/><path d="M917,48 L928,58.8" stroke="#d24a4a" stroke-width="0.8"/><path d="M914.2,51 Q916,53.5 920,53 Q923,53 922.8,57 Q922.8,60 924,61.3" fill="none" stroke="#777" stroke-width="0.8"/><circle cx="922.5" cy="53.2" r="0.7" fill="#a01010"/><path d="M950.8,50.4 V55.2 M965.8,50.4 V55.2" stroke="#555" stroke-width="0.8"/><path d="M951.5,52.8 H965" stroke="#444" stroke-width="0.8"/><polygon points="951,52.8 953,52 953,53.6" fill="#444"/><polygon points="965.6,52.8 963.6,52 963.6,53.6" fill="#444"/><rect x="950.2" y="56" width="16.2" height="3.3" fill="#e9ac22"/><path d="M951,57.6 H965.6" stroke="#c98a10" stroke-width="0.4" stroke-dasharray="0.6 0.6"/><path d="M990,45.6 H1000 L1003.5,49.2 V63.4 H990 Z" fill="#fff" stroke="#9a9a9a" stroke-width="0.8"/><polygon points="999.8,45.6 1003.5,49.2 999.8,49.2" fill="#e2ae45"/><rect x="989.6" y="56" width="14.2" height="7.6" fill="#dfa83a"/><circle cx="992.6" cy="59.7" r="1.6" fill="none" stroke="#5a3a00" stroke-width="1"/><text x="995" y="61.6" font-size="4.2" font-weight="700" fill="#fff" font-family="Liberation Sans">SVG</text><path d="M986,51.3 H993.5" stroke="#1e8ad8" stroke-width="1.5"/><polygon points="996.5,51.3 992.6,48.7 992.6,53.9" fill="#1e8ad8"/><path d="M1014,48.2 L1015.5,46.6 H1028 V59.8 L1026.6,61.5 H1014 Z" fill="#e6e6e6" stroke="#8a8a8a" stroke-width="0.8"/><path d="M1026.6,48.2 H1014 M1026.6,48.2 V61.5 M1026.6,48.2 L1028,46.6" fill="none" stroke="#8a8a8a" stroke-width="0.6"/><rect x="1026.6" y="48.2" width="1.4" height="13.3" fill="#cfcfcf"/><path d="M1011.5,58.5 Q1013,56 1017,56" fill="none" stroke="#333" stroke-width="1.4"/><polygon points="1019.5,56 1016.5,54 1016.5,58.2" fill="#333"/><path d="M1037.8,45.6 H1048 L1051.8,49.4 V63.4 H1037.8 Z" fill="#fff" stroke="#8a8a8a" stroke-width="0.8"/><polygon points="1048,45.6 1051.8,49.4 1048,49.4" fill="#555"/><path d="M1034,51.3 H1041.5" stroke="#1e8ad8" stroke-width="1.5"/><polygon points="1044.5,51.3 1040.6,48.7 1040.6,53.9" fill="#1e8ad8"/><rect x="1059" y="46" width="16" height="16" fill="#7ec6f5"/><path d="M1059,62 V56 Q1061,53 1063,53 Q1066,53 1069,58 Q1070.5,56.5 1072,56.5 Q1074,57 1075,59 V62 Z" fill="#3b8fd2"/><circle cx="1070.6" cy="50.7" r="1.4" fill="#f2fbff"/><rect x="1092.1" y="44" width="21.3" height="20.8" fill="#1b96d9"/><rect x="1095" y="46.2" width="14.3" height="11.3" fill="none" stroke="#5ad4e6" stroke-width="0.6" stroke-dasharray="1 1.2"/><polygon points="1105.6,54 1105.6,62.2 1107.4,60.5 1108.8,63.4 1110.2,62.7 1108.8,59.9 1111.2,59.7" fill="#fff"/><circle cx="1153.3" cy="54.7" r="8.9" fill="#5ec31a"/><path d="M1148.8,54.8 L1152.1,58 L1158.3,51.4" fill="none" stroke="#fff" stroke-width="2.1"/></svg>
<!-- canvas -->
<svg style="left:0;top:0" width="1920" height="781"><defs>
<pattern id="hatch" patternUnits="userSpaceOnUse" width="20" height="4.9897" patternTransform="translate(801.0 367) rotate(26.508)">
<rect x="0" y="0" width="20" height="4.9897" fill="#c2f1fb"/><rect x="0" y="-0.75" width="20" height="1.5" fill="#24505a"/>
</pattern>
<clipPath id="hclip"><rect x="789.2" y="367" width="483.3" height="266"/></clipPath>
</defs><polygon points="1163.4,183.4 1258.3,286.5 897.3,618.6 802.4,515.5" fill="#edf7fd" stroke="#74c4e6" stroke-width="1"/><rect x="789.2" y="149.9" width="483.3" height="483.1" fill="none" stroke="#7a7a7a" stroke-width="1.05" stroke-dasharray="6.1 2.2"/><rect x="803.4" y="164" width="455.3" height="454.6" fill="none" stroke="#7a7a7a" stroke-width="1.05" stroke-dasharray="6.1 2.2"/><rect x="789" y="367" width="484" height="266" fill="url(#hatch)"/><g clip-path="url(#hclip)" opacity="0.55"><polygon points="1163.4,183.4 1258.3,286.5 897.3,618.6 802.4,515.5" fill="none" stroke="#6fd0ee" stroke-width="0.9"/><rect x="803.4" y="164" width="455.3" height="454.6" fill="none" stroke="#7aa8b8" stroke-width="0.9" stroke-dasharray="6.1 2.2"/></g><rect x="789" y="367" width="484.3" height="1.1" fill="#141a24"/><rect x="789" y="632.5" width="484.3" height="1.2" fill="#141a24"/><rect x="789" y="367" width="1.2" height="266.6" fill="#141a24"/><rect x="1272" y="367" width="1.3" height="266.6" fill="#141a24"/><rect x="974.8" y="576.9" width="48.9" height="49.3" fill="#fbf2d2" style="mix-blend-mode:multiply"/><line x1="1030.70" y1="577.00" x2="1030.70" y2="633.00" stroke="#7fd07a" stroke-width="0.9" /><line x1="789.20" y1="142.40" x2="1272.50" y2="142.40" stroke="#3a3a3a" stroke-width="0.9" /><polygon points="789.20,142.40 794.70,140.90 794.70,143.90" fill="#222"/><polygon points="1272.50,142.40 1267.00,143.90 1267.00,140.90" fill="#222"/><line x1="789.20" y1="138.80" x2="789.20" y2="149.00" stroke="#3a3a3a" stroke-width="0.8" /><line x1="1272.50" y1="139.00" x2="1272.50" y2="147.00" stroke="#3a3a3a" stroke-width="0.8" /><line x1="767.00" y1="149.90" x2="767.00" y2="633.00" stroke="#8e8e8e" stroke-width="1.1" /><polygon points="767.00,149.90 768.50,155.40 765.50,155.40" fill="#222"/><polygon points="767.00,633.00 765.50,627.50 768.50,627.50" fill="#222"/><line x1="763.50" y1="149.90" x2="786.50" y2="149.90" stroke="#8e8e8e" stroke-width="1.2" /><line x1="763.50" y1="633.00" x2="786.50" y2="633.00" stroke="#8e8e8e" stroke-width="1.2" /><line x1="789.20" y1="659.40" x2="1272.50" y2="659.40" stroke="#8a8a8a" stroke-width="1.1" /><polygon points="789.20,659.40 794.70,657.90 794.70,660.90" fill="#222"/><polygon points="1272.50,659.40 1267.00,660.90 1267.00,657.90" fill="#222"/><line x1="789.20" y1="636.00" x2="789.20" y2="662.50" stroke="#777" stroke-width="0.9" /><line x1="1272.50" y1="636.00" x2="1272.50" y2="662.50" stroke="#777" stroke-width="0.9" /><line x1="789.20" y1="209.40" x2="803.40" y2="209.40" stroke="#3a3a3a" stroke-width="0.8" /><polygon points="803.40,209.40 799.40,210.60 799.40,208.20" fill="#222"/><line x1="1136.30" y1="155.10" x2="776.50" y2="486.10" stroke="#2a2a2a" stroke-width="0.85" /><polygon points="1136.30,155.10 1133.27,159.93 1131.24,157.72" fill="#222"/><polygon points="776.50,486.10 779.53,481.27 781.56,483.48" fill="#222"/><line x1="1161.30" y1="181.00" x2="1134.70" y2="152.50" stroke="#2a2a2a" stroke-width="0.85" /><line x1="789.20" y1="501.10" x2="774.80" y2="485.00" stroke="#2a2a2a" stroke-width="0.85" /><line x1="802.40" y1="515.50" x2="789.20" y2="501.10" stroke="#2a2a2a" stroke-width="0.6" opacity="0.35"/><line x1="789.60" y1="528.80" x2="772.50" y2="544.30" stroke="#2a2a2a" stroke-width="0.85" /><line x1="802.40" y1="515.50" x2="789.60" y2="528.80" stroke="#2a2a2a" stroke-width="0.6" opacity="0.35"/><line x1="882.30" y1="633.50" x2="866.80" y2="648.00" stroke="#2a2a2a" stroke-width="0.85" /><line x1="897.30" y1="618.60" x2="882.30" y2="633.50" stroke="#2a2a2a" stroke-width="0.6" opacity="0.35"/><line x1="774.80" y1="543.70" x2="868.80" y2="644.60" stroke="#2f4248" stroke-width="0.8" /><polygon points="774.80,543.70 779.63,546.73 777.42,548.76" fill="#222"/><polygon points="868.80,644.60 863.97,641.57 866.18,639.54" fill="#222"/><path d="M908.53,422.97 A140.8,140.8 0 0 1 898.82,618.10" fill="none" stroke="#3e535a" stroke-width="0.7"/><polygon points="908.53,422.97 912.39,425.58 910.58,427.15" fill="#222"/><polygon points="898.82,618.10 901.28,614.14 902.93,615.89" fill="#222"/><circle cx="789.2" cy="633" r="2.5" fill="#111"/><circle cx="789.2" cy="367" r="2.3" fill="#6b5a8e"/><circle cx="1272.5" cy="367" r="2.3" fill="#6b5a8e"/><circle cx="1272.5" cy="633" r="2.3" fill="#6b5a8e"/><circle cx="1030.7" cy="633.3" r="2.9" fill="#f4f4f4" stroke="#a0a0a0" stroke-width="1.4"/><rect x="1108" y="152.7" width="10" height="4.6" rx="1" fill="#d8d8d8" stroke="#9a9a9a" stroke-width="0.7"/><path d="M1109.5,155 H1116.5" stroke="#888" stroke-width="0.6" stroke-dasharray="0.7 0.7"/><rect x="945.3" y="635.7" width="10" height="4.6" rx="1" fill="#d8d8d8" stroke="#9a9a9a" stroke-width="0.7"/><path d="M946.8,638 H953.8" stroke="#888" stroke-width="0.6" stroke-dasharray="0.7 0.7"/><rect x="792.9000000000001" y="306" width="4.6" height="10" rx="1" fill="#d8d8d8" stroke="#9a9a9a" stroke-width="0.7"/><path d="M795.2,307.5 V314.5" stroke="#888" stroke-width="0.6" stroke-dasharray="0.7 0.7"/><rect x="1276.0" y="466" width="4.6" height="10" rx="1" fill="#d8d8d8" stroke="#9a9a9a" stroke-width="0.7"/><path d="M1278.3,467.5 V474.5" stroke="#888" stroke-width="0.6" stroke-dasharray="0.7 0.7"/><path d="M1159.5,189.5 H1166.5 M1163,189.5 V197" stroke="#a8a8a8" stroke-width="1.5"/><path d="M1243.5,286.5 H1250.5 M1250.5,283 V290" stroke="#a8a8a8" stroke-width="1.5"/><path d="M779.5,401 V398.5 Q779.5,397 781,397 H781.5 V393.8 Q781.5,391.3 784,391.3 Q786.5,391.3 786.5,393.8 V397 H788.5 V401 Z" fill="#bdbdbd"/><path d="M784,393 V397.5 M781,399 H788" stroke="#e8e8e8" stroke-width="0.6"/><path d="M792,400 L797,393 M795.5,400 L800.5,393" stroke="#a8c4cc" stroke-width="1.3" opacity="0.8"/></svg>
<div class="t" style="left:1237.9px;top:132.2px;font-size:8.3px;color:#3a3a3a">fx: 69.00</div>
<div class="t" style="left:1226px;top:647px;font-size:8.3px;color:#6a6a6a">(69.00)</div>
<div class="t" style="left:789px;top:199.3px;font-size:8px;color:#3a3a3a">2.00</div>
<div class="t" style="left:756px;top:245px;font-size:8.3px;color:#3a3a3a;transform:rotate(90deg);transform-origin:0 0;left:777px;top:233px">fx: 69.00</div>
<div class="t" style="left:943px;top:312px;font-size:8.3px;color:#3a3a3a;transform:rotate(-42.6deg);transform-origin:50% 50%">70.00</div>
<div class="t" style="left:817.5px;top:585.5px;font-size:8px;color:#3f6670;transform:rotate(47.4deg);transform-origin:50% 50%">37.00</div>
<div class="t" style="left:930px;top:527px;font-size:8px;color:#3f6670;transform:rotate(-90deg);transform-origin:50% 50%">90.0°</div>
<div class="a" style="left:1869.8px;top:98.5px;width:29.4px;height:30px;background:linear-gradient(#f4f4f4,#e2e2e2);border:1px solid #cfcfcf;box-shadow:1px 2px 2px rgba(0,0,0,0.12)"></div>
<div class="t" style="left:1875.3px;top:109.6px;font-size:8px;font-weight:700;color:#7c7c7c;transform:scaleX(0.8);transform-origin:0 0">RIGHT</div>
<div class="t" style="left:1894.3px;top:90.5px;font-size:7px;color:#6fd06f">Y</div>
<div class="t" style="left:1862.8px;top:121.8px;font-size:7.5px;color:#6a6ae0">Z</div>
<div class="t" style="left:1898px;top:125.5px;font-size:7px;color:#e06a6a">X</div>

<!-- browser -->
<div class="a" style="left:225px;top:80px;width:168px;height:13.7px;background:#f0f0f0;border:1px solid #e0e0e0;box-shadow:0 1px 1px rgba(0,0,0,0.06)"></div>
<svg style="left:228.5px;top:84.8px" width="6" height="4"><polygon points="0,2 3,0 3,4" fill="#333"/><polygon points="3,2 6,0 6,4" fill="#333"/></svg>
<div class="t" style="left:239.7px;top:85.3px;font-size:5.5px;color:#7a7a7a">BROWSER</div>
<svg style="left:379.8px;top:83.2px" width="8" height="8"><circle cx="3.8" cy="3.8" r="3" fill="#333"/><rect x="2" y="3.3" width="3.6" height="1" fill="#eee"/></svg>
<div class="a" style="left:245.4px;top:96.9px;width:94.29999999999998px;height:11.6px;background:#f0f0f0"></div>
<svg style="left:234.8px;top:99.5px" width="7" height="7"><polygon points="6.3,0 6.3,6.3 0,6.3" fill="#333"/><polygon points="5,2.6 5,5 2.6,5" fill="#ddd"/></svg>
<svg style="left:247.20000000000002px;top:99.7px;opacity:1" width="10" height="7"><path d="M0.4,3 Q4.6,-1.4 8.8,3 Q4.6,7.4 0.4,3 Z" fill="none" stroke="#7e7e7e" stroke-width="1.1"/><circle cx="4.6" cy="3" r="1.5" fill="#7e7e7e"/></svg>
<div class="a" style="left:259.8px;top:98.3px;width:54.2px;height:8.5px;background:#8d8d8d"></div>
<svg style="left:261.8px;top:98.2px" width="9" height="9"><rect x="0.6" y="0.6" width="7.4" height="7.6" rx="1.3" fill="#d6d6d6" stroke="#f7f7f7" stroke-width="1.2"/></svg>
<div class="t" style="left:278px;top:99.64px;font-size:6.35px;font-weight:700;color:#fff">AiMate v2</div>
<svg style="left:315.8px;top:98.8px" width="9" height="9"><circle cx="3.9" cy="3.9" r="3.8" fill="#22a7c9"/><circle cx="3.9" cy="3.9" r="2" fill="#5cc6dc"/><circle cx="6.6" cy="6.8" r="1.3" fill="#333"/></svg>
<svg style="left:327.8px;top:98.5px" width="9" height="9"><circle cx="4.2" cy="4.2" r="3.6" fill="none" stroke="#333" stroke-width="0.9"/><circle cx="4.2" cy="4.2" r="1.3" fill="#222"/></svg>
<div class="a" style="left:256px;top:110.8px;width:73.5px;height:10.6px;background:#f0f0f0"></div>
<svg style="left:245px;top:111.89999999999999px" width="7" height="9"><polygon points="0.6,0.6 5.6,4.2 0.6,7.8" fill="none" stroke="#444" stroke-width="1" stroke-linejoin="round"/></svg>
<svg style="left:257.3px;top:111.69999999999999px" width="9" height="9"><g transform="translate(4.4 4.4)" fill="#8e8e8e"><circle r="2.9"/><rect x="-0.8" y="-4.3" width="1.6" height="8.6"/><rect x="-0.8" y="-4.3" width="1.6" height="8.6" transform="rotate(45)"/><rect x="-0.8" y="-4.3" width="1.6" height="8.6" transform="rotate(90)"/><rect x="-0.8" y="-4.3" width="1.6" height="8.6" transform="rotate(135)"/><circle r="1.3" fill="#f0f0f0"/></g></svg>
<div class="t" style="left:274px;top:114.12px;font-size:6.4px;color:#4a4a4a;letter-spacing:-0.2px">Document Settings</div>
<div class="a" style="left:256px;top:124.1px;width:61px;height:10.6px;background:#f0f0f0"></div>
<svg style="left:245px;top:125.2px" width="7" height="9"><polygon points="0.6,0.6 5.6,4.2 0.6,7.8" fill="none" stroke="#444" stroke-width="1" stroke-linejoin="round"/></svg>
<svg style="left:257.0px;top:125.9px" width="9" height="7"><path d="M0,0.2 H3.3 L4,1 H9 V7 H0 Z" fill="#8c8c8c"/></svg>
<div class="t" style="left:274px;top:127.42px;font-size:6.4px;color:#4a4a4a;letter-spacing:-0.2px">Named Views</div>
<div class="a" style="left:256px;top:137.4px;width:52.5px;height:10.6px;background:#f0f0f0"></div>
<svg style="left:245px;top:139.5px" width="7" height="7"><polygon points="6.3,0 6.3,6.3 0,6.3" fill="#333"/><polygon points="5,2.6 5,5 2.6,5" fill="#ddd"/></svg>
<svg style="left:257.09999999999997px;top:139.7px;opacity:1" width="10" height="7"><path d="M0.4,3 Q4.6,-1.4 8.8,3 Q4.6,7.4 0.4,3 Z" fill="none" stroke="#7e7e7e" stroke-width="1.1"/><circle cx="4.6" cy="3" r="1.5" fill="#7e7e7e"/></svg>
<svg style="left:271.1px;top:139.2px" width="9" height="7"><path d="M0,0.2 H3.3 L4,1 H9 V7 H0 Z" fill="#8c8c8c"/></svg>
<div class="t" style="left:288px;top:140.72px;font-size:6.4px;color:#4a4a4a;letter-spacing:-0.2px">Origin</div>
<div class="a" style="left:265.5px;top:150.9px;width:42.0px;height:10.6px;background:#f0f0f0"></div>
<svg style="left:267.2px;top:153.2px;opacity:1" width="10" height="7"><path d="M0.4,3 Q4.6,-1.4 8.8,3 Q4.6,7.4 0.4,3 Z" fill="none" stroke="#7e7e7e" stroke-width="1.1"/><circle cx="4.6" cy="3" r="1.5" fill="#7e7e7e"/></svg>
<svg style="left:281.1px;top:151.7px" width="9" height="9"><path d="M4.5,0 V9 M0,4.5 H9" stroke="#ef8c3a" stroke-width="0.9"/><circle cx="4.5" cy="4.5" r="2.2" fill="#f4b070" stroke="#ec7c22" stroke-width="0.9"/></svg>
<div class="t" style="left:297.8px;top:154.22px;font-size:6.4px;color:#4a4a4a;letter-spacing:-0.2px">O</div>
<div class="a" style="left:265.5px;top:164.2px;width:42.0px;height:10.6px;background:#f0f0f0"></div>
<svg style="left:267.2px;top:166.5px;opacity:1" width="10" height="7"><path d="M0.4,3 Q4.6,-1.4 8.8,3 Q4.6,7.4 0.4,3 Z" fill="none" stroke="#7e7e7e" stroke-width="1.1"/><circle cx="4.6" cy="3" r="1.5" fill="#7e7e7e"/></svg>
<svg style="left:281.1px;top:165.0px" width="9" height="9"><rect x="2.5" y="0.5" width="6" height="6" fill="none" stroke="#8e8e8e" stroke-width="0.8"/><path d="M0.5,8.5 L6,3" stroke="#ef9a55" stroke-width="0.9"/></svg>
<div class="t" style="left:297.8px;top:167.52px;font-size:6.4px;color:#4a4a4a;letter-spacing:-0.2px">X</div>
<div class="a" style="left:265.5px;top:177.5px;width:42.0px;height:10.6px;background:#f0f0f0"></div>
<svg style="left:267.2px;top:179.79999999999998px;opacity:1" width="10" height="7"><path d="M0.4,3 Q4.6,-1.4 8.8,3 Q4.6,7.4 0.4,3 Z" fill="none" stroke="#7e7e7e" stroke-width="1.1"/><circle cx="4.6" cy="3" r="1.5" fill="#7e7e7e"/></svg>
<svg style="left:281.1px;top:178.29999999999998px" width="9" height="9"><rect x="2.5" y="0.5" width="6" height="6" fill="none" stroke="#8e8e8e" stroke-width="0.8"/><path d="M0.5,8.5 L6,3" stroke="#ef9a55" stroke-width="0.9"/></svg>
<div class="t" style="left:297.8px;top:180.82px;font-size:6.4px;color:#4a4a4a;letter-spacing:-0.2px">Y</div>
<div class="a" style="left:265.5px;top:190.8px;width:42.0px;height:10.6px;background:#f0f0f0"></div>
<svg style="left:267.2px;top:193.1px;opacity:1" width="10" height="7"><path d="M0.4,3 Q4.6,-1.4 8.8,3 Q4.6,7.4 0.4,3 Z" fill="none" stroke="#7e7e7e" stroke-width="1.1"/><circle cx="4.6" cy="3" r="1.5" fill="#7e7e7e"/></svg>
<svg style="left:281.1px;top:191.6px" width="9" height="9"><rect x="2.5" y="0.5" width="6" height="6" fill="none" stroke="#8e8e8e" stroke-width="0.8"/><path d="M0.5,8.5 L6,3" stroke="#ef9a55" stroke-width="0.9"/></svg>
<div class="t" style="left:297.8px;top:194.12px;font-size:6.4px;color:#4a4a4a;letter-spacing:-0.2px">Z</div>
<div class="a" style="left:265.5px;top:204.1px;width:46.30000000000001px;height:10.6px;background:#f0f0f0"></div>
<svg style="left:267.2px;top:206.39999999999998px;opacity:1" width="10" height="7"><path d="M0.4,3 Q4.6,-1.4 8.8,3 Q4.6,7.4 0.4,3 Z" fill="none" stroke="#7e7e7e" stroke-width="1.1"/><circle cx="4.6" cy="3" r="1.5" fill="#7e7e7e"/></svg>
<svg style="left:281.1px;top:204.89999999999998px" width="10" height="9"><path d="M3,2.5 V0.5 H9 V6.5 H7" fill="none" stroke="#8e8e8e" stroke-width="0.8"/><rect x="0.8" y="2.8" width="6.2" height="6" fill="#e49457"/></svg>
<div class="t" style="left:297.8px;top:207.42px;font-size:6.4px;color:#4a4a4a;letter-spacing:-0.2px">XY</div>
<div class="a" style="left:265.5px;top:217.4px;width:46.30000000000001px;height:10.6px;background:#f0f0f0"></div>
<svg style="left:267.2px;top:219.7px;opacity:1" width="10" height="7"><path d="M0.4,3 Q4.6,-1.4 8.8,3 Q4.6,7.4 0.4,3 Z" fill="none" stroke="#7e7e7e" stroke-width="1.1"/><circle cx="4.6" cy="3" r="1.5" fill="#7e7e7e"/></svg>
<svg style="left:281.1px;top:218.2px" width="10" height="9"><path d="M3,2.5 V0.5 H9 V6.5 H7" fill="none" stroke="#8e8e8e" stroke-width="0.8"/><rect x="0.8" y="2.8" width="6.2" height="6" fill="#e49457"/></svg>
<div class="t" style="left:297.8px;top:220.72px;font-size:6.4px;color:#4a4a4a;letter-spacing:-0.2px">XZ</div>
<div class="a" style="left:265.5px;top:230.7px;width:46.30000000000001px;height:10.6px;background:#f0f0f0"></div>
<svg style="left:267.2px;top:233.0px;opacity:1" width="10" height="7"><path d="M0.4,3 Q4.6,-1.4 8.8,3 Q4.6,7.4 0.4,3 Z" fill="none" stroke="#7e7e7e" stroke-width="1.1"/><circle cx="4.6" cy="3" r="1.5" fill="#7e7e7e"/></svg>
<svg style="left:281.1px;top:231.5px" width="10" height="9"><path d="M3,2.5 V0.5 H9 V6.5 H7" fill="none" stroke="#8e8e8e" stroke-width="0.8"/><rect x="0.8" y="2.8" width="6.2" height="6" fill="#e49457"/></svg>
<div class="t" style="left:297.8px;top:234.02px;font-size:6.4px;color:#4a4a4a;letter-spacing:-0.2px">YZ</div>
<div class="a" style="left:256px;top:244.3px;width:57px;height:10.6px;background:#f0f0f0"></div>
<svg style="left:245px;top:246.4px" width="7" height="7"><polygon points="6.3,0 6.3,6.3 0,6.3" fill="#333"/><polygon points="5,2.6 5,5 2.6,5" fill="#ddd"/></svg>
<svg style="left:257.09999999999997px;top:246.6px;opacity:1" width="10" height="7"><path d="M0.4,3 Q4.6,-1.4 8.8,3 Q4.6,7.4 0.4,3 Z" fill="none" stroke="#7e7e7e" stroke-width="1.1"/><circle cx="4.6" cy="3" r="1.5" fill="#7e7e7e"/></svg>
<svg style="left:271.1px;top:246.1px" width="9" height="7"><path d="M0,0.2 H3.3 L4,1 H9 V7 H0 Z" fill="#8c8c8c"/></svg>
<div class="t" style="left:288px;top:247.62px;font-size:6.4px;color:#4a4a4a;letter-spacing:-0.2px">Bodies</div>
<div class="a" style="left:266px;top:257.6px;width:55px;height:10.6px;background:#f0f0f0"></div>
<svg style="left:267.2px;top:259.9px;opacity:1" width="10" height="7"><path d="M0.4,3 Q4.6,-1.4 8.8,3 Q4.6,7.4 0.4,3 Z" fill="none" stroke="#7e7e7e" stroke-width="1.1"/><circle cx="4.6" cy="3" r="1.5" fill="#7e7e7e"/></svg>
<svg style="left:281px;top:258.4px" width="10" height="10"><rect x="0.6" y="0.6" width="8.2" height="8.2" rx="1.8" fill="#fff" stroke="#666" stroke-width="0.9"/><rect x="3" y="3" width="4" height="4.5" fill="#d5d5d5"/></svg>
<div class="t" style="left:298px;top:260.92px;font-size:6.4px;color:#4a4a4a;letter-spacing:-0.2px">Body1</div>
<div class="a" style="left:256px;top:270.9px;width:63.5px;height:10.6px;background:#f0f0f0"></div>
<svg style="left:245px;top:273.0px" width="7" height="7"><polygon points="6.3,0 6.3,6.3 0,6.3" fill="#333"/><polygon points="5,2.6 5,5 2.6,5" fill="#ddd"/></svg>
<svg style="left:257.09999999999997px;top:273.2px;opacity:1" width="10" height="7"><path d="M0.4,3 Q4.6,-1.4 8.8,3 Q4.6,7.4 0.4,3 Z" fill="none" stroke="#7e7e7e" stroke-width="1.1"/><circle cx="4.6" cy="3" r="1.5" fill="#7e7e7e"/></svg>
<svg style="left:271.1px;top:272.7px" width="9" height="7"><path d="M0,0.2 H3.3 L4,1 H9 V7 H0 Z" fill="#8c8c8c"/></svg>
<div class="t" style="left:288px;top:274.22px;font-size:6.4px;color:#4a4a4a;letter-spacing:-0.2px">Sketches</div>
<div class="a" style="left:266px;top:284.2px;width:58.60000000000002px;height:10.6px;background:#f0f0f0"></div>
<svg style="left:267.2px;top:286.5px;opacity:1" width="10" height="7"><path d="M0.4,3 Q4.6,-1.4 8.8,3 Q4.6,7.4 0.4,3 Z" fill="none" stroke="#c4c4c4" stroke-width="1.1"/><circle cx="4.6" cy="3" r="1.5" fill="#c4c4c4"/></svg>
<svg style="left:281px;top:285.0px" width="10" height="10"><path d="M1,1 H8 M1,1 V8 M1,8 H5" fill="none" stroke="#777" stroke-width="0.7" stroke-dasharray="1.2 0.8"/><path d="M7,4.5 Q9.4,7 8.8,8.2 A1.9,1.9 0 0 1 5.2,8.2 Q4.6,7 7,4.5 Z" fill="#d84040"/></svg>
<div class="t" style="left:298px;top:287.52px;font-size:6.4px;color:#4a4a4a;letter-spacing:-0.2px">Sketch3</div>
<div class="a" style="left:266px;top:297.5px;width:58.60000000000002px;height:10.6px;background:#f0f0f0"></div>
<svg style="left:267.2px;top:299.8px;opacity:1" width="10" height="7"><path d="M0.4,3 Q4.6,-1.4 8.8,3 Q4.6,7.4 0.4,3 Z" fill="none" stroke="#7e7e7e" stroke-width="1.1"/><circle cx="4.6" cy="3" r="1.5" fill="#7e7e7e"/></svg>
<svg style="left:281px;top:298.3px" width="10" height="10"><path d="M1,1 H8 M1,1 V8 M1,8 H5" fill="none" stroke="#5aa0e0" stroke-width="0.7" stroke-dasharray="1.2 0.8"/><path d="M5,8.5 L9,4.5" stroke="#eea030" stroke-width="1.4"/></svg>
<div class="t" style="left:298px;top:300.82px;font-size:6.4px;color:#4a4a4a;letter-spacing:-0.2px">Sketch4</div>
<!-- palette -->
<div class="a" style="left:429.4px;top:191.3px;width:139.5px;height:235.9px;background:#f1f1f1;border:1px solid #dcdcdc;box-shadow:0 1px 2px rgba(0,0,0,0.08)"></div>
<div class="a" style="left:430.4px;top:205px;width:137.5px;height:1px;background:#dcdcdc"></div>
<div class="a" style="left:430.4px;top:406.3px;width:137.5px;height:1px;background:#dcdcdc"></div>
<svg style="left:432px;top:195px" width="7" height="7"><circle cx="3.3" cy="3.3" r="2.9" fill="#333"/><rect x="1.7" y="2.8" width="3.2" height="1" fill="#eee"/></svg>
<div class="t" style="left:443.4px;top:195.57px;font-size:5.45px;color:#888;font-weight:400;letter-spacing:0px">SKETCH PALETTE</div>
<svg style="left:434.5px;top:211.5px" width="6" height="5"><polygon points="0,0 5.2,0 2.6,4.3" fill="#333"/></svg>
<div class="t" style="left:443px;top:210.94px;font-size:6.35px;color:#444;font-weight:700;letter-spacing:0px">Options</div>
<div class="t" style="left:436.6px;top:227.66px;font-size:6.3px;color:#4a4a4a;font-weight:400;letter-spacing:-0.08px">Linetype</div>
<div class="t" style="left:436.6px;top:244.38px;font-size:6.3px;color:#4a4a4a;font-weight:400;letter-spacing:-0.08px">Look At</div>
<div class="t" style="left:436.6px;top:261.10px;font-size:6.3px;color:#4a4a4a;font-weight:400;letter-spacing:-0.08px">Sketch Grid</div>
<div class="a" style="left:521.8px;top:259.94px;width:8px;height:8px;border:0.9px solid #7a7a7a;border-radius:1.6px;background:linear-gradient(#f7f7f7,#d6d6d6)"></div>
<div class="t" style="left:436.6px;top:277.82px;font-size:6.3px;color:#4a4a4a;font-weight:400;letter-spacing:-0.08px">Snap</div>
<div class="a" style="left:521.8px;top:276.66px;width:8px;height:8px;border:0.9px solid #7a7a7a;border-radius:1.6px;background:linear-gradient(#f7f7f7,#d6d6d6)"></div>
<div class="t" style="left:436.6px;top:294.54px;font-size:6.3px;color:#4a4a4a;font-weight:400;letter-spacing:-0.08px">Slice</div>
<div class="a" style="left:521.8px;top:293.38px;width:8px;height:8px;border:0.9px solid #7a7a7a;border-radius:1.6px;background:linear-gradient(#f7f7f7,#d6d6d6)"></div>
<svg style="left:522.5px;top:292.88px" width="7" height="8"><path d="M1.3,4.2 L3,6.3 L6,1" fill="none" stroke="#222" stroke-width="1.1"/></svg>
<div class="t" style="left:436.6px;top:311.26px;font-size:6.3px;color:#4a4a4a;font-weight:400;letter-spacing:-0.08px">Show Profile</div>
<div class="a" style="left:521.8px;top:310.10px;width:8px;height:8px;border:0.9px solid #7a7a7a;border-radius:1.6px;background:linear-gradient(#f7f7f7,#d6d6d6)"></div>
<svg style="left:522.5px;top:309.60px" width="7" height="8"><path d="M1.3,4.2 L3,6.3 L6,1" fill="none" stroke="#222" stroke-width="1.1"/></svg>
<div class="t" style="left:436.6px;top:327.98px;font-size:6.3px;color:#4a4a4a;font-weight:400;letter-spacing:-0.08px">Show Points</div>
<div class="a" style="left:521.8px;top:326.82px;width:8px;height:8px;border:0.9px solid #7a7a7a;border-radius:1.6px;background:linear-gradient(#f7f7f7,#d6d6d6)"></div>
<svg style="left:522.5px;top:326.32px" width="7" height="8"><path d="M1.3,4.2 L3,6.3 L6,1" fill="none" stroke="#222" stroke-width="1.1"/></svg>
<div class="t" style="left:436.6px;top:344.70px;font-size:6.3px;color:#4a4a4a;font-weight:400;letter-spacing:-0.08px">Show Dimensions</div>
<div class="a" style="left:521.8px;top:343.54px;width:8px;height:8px;border:0.9px solid #7a7a7a;border-radius:1.6px;background:linear-gradient(#f7f7f7,#d6d6d6)"></div>
<svg style="left:522.5px;top:343.04px" width="7" height="8"><path d="M1.3,4.2 L3,6.3 L6,1" fill="none" stroke="#222" stroke-width="1.1"/></svg>
<div class="t" style="left:436.6px;top:361.42px;font-size:6.3px;color:#4a4a4a;font-weight:400;letter-spacing:-0.08px">Show Constraints</div>
<div class="a" style="left:521.8px;top:360.26px;width:8px;height:8px;border:0.9px solid #7a7a7a;border-radius:1.6px;background:linear-gradient(#f7f7f7,#d6d6d6)"></div>
<svg style="left:522.5px;top:359.76px" width="7" height="8"><path d="M1.3,4.2 L3,6.3 L6,1" fill="none" stroke="#222" stroke-width="1.1"/></svg>
<div class="t" style="left:436.6px;top:378.14px;font-size:6.3px;color:#4a4a4a;font-weight:400;letter-spacing:-0.08px">Show Projected Geometries</div>
<div class="a" style="left:521.8px;top:376.98px;width:8px;height:8px;border:0.9px solid #7a7a7a;border-radius:1.6px;background:linear-gradient(#f7f7f7,#d6d6d6)"></div>
<svg style="left:522.5px;top:376.48px" width="7" height="8"><path d="M1.3,4.2 L3,6.3 L6,1" fill="none" stroke="#222" stroke-width="1.1"/></svg>
<div class="t" style="left:436.6px;top:394.86px;font-size:6.3px;color:#4a4a4a;font-weight:400;letter-spacing:-0.08px">3D Sketch</div>
<div class="a" style="left:521.8px;top:393.70px;width:8px;height:8px;border:0.9px solid #7a7a7a;border-radius:1.6px;background:linear-gradient(#f7f7f7,#d6d6d6)"></div>
<svg style="left:520.5px;top:225.5px" width="10" height="10"><path d="M8.5,1 L1.5,5 L8.5,9 M3.5,5 H8" fill="none" stroke="#f0a060" stroke-width="0.8"/><path d="M5.5,5 L8,3.5" stroke="#777" stroke-width="0.5"/></svg>
<svg style="left:537px;top:226.0px" width="9" height="9"><rect x="0.5" y="0.8" width="7.5" height="7.5" rx="2" fill="none" stroke="#c8c8c8" stroke-width="0.8"/><path d="M5,3 H7.5 V6" fill="none" stroke="#c8c8c8" stroke-width="0.7"/></svg>
<svg style="left:521px;top:242.39999999999998px" width="10" height="10"><rect x="0.6" y="2.6" width="8.4" height="6.6" rx="1.4" fill="#e6e6e6" stroke="#555" stroke-width="0.9"/><rect x="2.2" y="4.6" width="5.2" height="2.4" fill="none" stroke="#555" stroke-width="0.8"/><path d="M2,2.6 V0.8 L4,2.6 M7.6,2.6 V0.8 L5.6,2.6" fill="#555" stroke="#555" stroke-width="0.7"/></svg>
<div class="a" style="left:516.2px;top:411.7px;width:45.7px;height:11px;background:#f4f4f4;border:1px solid #c8c8c8"></div>
<div class="t" style="left:518.8px;top:414.12px;font-size:6.8px;color:#555;font-weight:400;letter-spacing:0px">Finish Sketch</div>
<!-- bottom -->
<div class="a" style="left:0;top:779px;width:1920px;height:2px;background:#f3f3f3"></div>
<div class="a" style="left:225.2px;top:736.9px;width:168px;height:13.9px;background:#f0f0f0;border:1px solid #e2e2e2"></div>
<div class="t" style="left:239.8px;top:741.7px;font-size:5.45px;color:#777">COMMENTS</div>
<svg style="left:379.8px;top:740px" width="8" height="8"><circle cx="3.8" cy="3.8" r="3" fill="#333"/><path d="M2,3.8 H5.6 M3.8,2 V5.6" stroke="#eee" stroke-width="0.9"/></svg>
<svg style="left:0;top:0" width="1920" height="781">
<rect x="229.3" y="763" width="1.4" height="7.5" fill="#555"/><polygon points="230.7,766.8 236.3,763 236.3,770.5" fill="#555"/>
<polygon points="243,766.8 247,763.5 247,770" fill="#555"/><rect x="247.5" y="764" width="1.3" height="5.6" fill="#555"/>
<polygon points="257.3,763 263.8,766.8 257.3,770.8" fill="#555"/>
<rect x="270.5" y="764" width="1.3" height="5.6" fill="#555"/><polygon points="272.2,763.5 276.4,766.8 272.2,770" fill="#555"/>
<polygon points="285,763 290.5,766.8 285,770.5" fill="#555"/><rect x="290.8" y="763" width="1.4" height="7.5" fill="#555"/>
<path d="M304.5,762.3 H311 M304.5,762.3 V769.5 M304.5,769.5 H308" fill="none" stroke="#5aa0e0" stroke-width="0.7" stroke-dasharray="1.2 0.7"/><path d="M308,770 L313,765" stroke="#eea030" stroke-width="1.3"/><circle cx="313.3" cy="765" r="0.8" fill="#e04040"/>
<rect x="318" y="762.3" width="7.6" height="8.6" rx="1.2" fill="#4a9fe0"/><rect x="318" y="762.3" width="7.6" height="2" fill="#7fc0f0"/><path d="M326.8,762.3 V769" stroke="#555" stroke-width="0.6"/>
<path d="M331.5,762.3 H338 M331.5,762.3 V769.5 M331.5,769.5 H335" fill="none" stroke="#5aa0e0" stroke-width="0.7" stroke-dasharray="1.2 0.7"/><path d="M335,770 L340,765" stroke="#eea030" stroke-width="1.3"/>
<path d="M309,774 V775.5 H336 V774 M322.5,774 V775.5" fill="none" stroke="#cfcfcf" stroke-width="0.8"/>
<polygon points="339.5,759 345.5,759 343.3,762.5 343.3,777 341.7,777 341.7,762.5" fill="#555"/>
</svg>
<div class="a" style="left:1006px;top:736px;width:131.8px;height:13.3px;background:#efefef"></div>
<svg style="left:0;top:0" width="1920" height="781">
<polygon points="1011.5,737.5 1016,742.7 1011.5,747.8 1007.2,742.7" fill="#e8e8e8" stroke="#888" stroke-width="0.7"/><circle cx="1011.5" cy="742.7" r="1" fill="#5ab0e6"/>
<polygon points="1019.5,741.8 1022.4,741.8 1021,743.6" fill="#333"/>
<rect x="1025.6" y="739.5" width="8.6" height="7" rx="1" fill="#ddd" stroke="#666" stroke-width="0.8"/><rect x="1027.4" y="741.7" width="5" height="2.4" fill="none" stroke="#666" stroke-width="0.6"/><path d="M1027,739.5 V738 M1032.8,739.5 V738" stroke="#666" stroke-width="0.8"/>
<path d="M1041.5,746 Q1040,743 1041,741.5 V739.5 Q1041.8,738.6 1042.6,739.5 V738.5 Q1043.5,737.5 1044.3,738.5 Q1045.2,737.5 1046,738.7 Q1046.9,738 1047.6,739 V743.5 Q1047.6,746.5 1045,747.5 Z" fill="#e8e8e8" stroke="#777" stroke-width="0.7"/>
<circle cx="1057.3" cy="742" r="2.8" fill="none" stroke="#555" stroke-width="0.9"/><path d="M1059.3,744 L1061.5,746.5" stroke="#222" stroke-width="1.3"/><path d="M1062,737.5 V740.5 M1060.5,739 H1063.5" stroke="#555" stroke-width="0.7"/>
<circle cx="1073.2" cy="742" r="3.3" fill="#e8f1f3" stroke="#555" stroke-width="0.9"/><path d="M1075.5,744.3 L1077.5,746.7" stroke="#222" stroke-width="1.3"/>
<polygon points="1081.6,741.8 1084.5,741.8 1083,743.6" fill="#333"/>
<rect x="1088" y="738.5" width="8.6" height="6.8" rx="1" fill="#6e9ad6" stroke="#4a6fa8" stroke-width="0.6"/><rect x="1089.5" y="740.5" width="5.6" height="1.8" fill="#a8c8ee"/><rect x="1090.8" y="745.3" width="3" height="1.6" fill="#666"/>
<polygon points="1098,741.8 1100.9,741.8 1099.5,743.6" fill="#333"/>
<rect x="1105.3" y="738.2" width="8.5" height="9" rx="0.8" fill="#8a8a8a"/><path d="M1108.1,738.2 V747.2 M1111,738.2 V747.2 M1105.3,741.2 H1113.8 M1105.3,744.2 H1113.8" stroke="#a5a5a5" stroke-width="0.5"/>
<polygon points="1115.5,741.8 1118.4,741.8 1117,743.6" fill="#333"/>
<rect x="1122.2" y="738.7" width="8.6" height="8" rx="0.8" fill="#5e8ed0"/><path d="M1126.5,738.7 V746.7 M1122.2,742.7 H1130.8" stroke="#c8dcf4" stroke-width="0.9"/>
<polygon points="1132.8,741.8 1135.7,741.8 1134.3,743.6" fill="#333"/>
<circle cx="1908.8" cy="743.7" r="4.1" fill="#111"/><path d="M1906.5,745 L1909.5,742.5 H1910.7 V745" fill="none" stroke="#fff" stroke-width="0.9"/>
<g transform="translate(1908.2 766.6)" fill="#9a9a9a"><circle r="2.8"/><rect x="-0.75" y="-4.1" width="1.5" height="8.2"/><rect x="-0.75" y="-4.1" width="1.5" height="8.2" transform="rotate(45)"/><rect x="-0.75" y="-4.1" width="1.5" height="8.2" transform="rotate(90)"/><rect x="-0.75" y="-4.1" width="1.5" height="8.2" transform="rotate(135)"/><circle r="1.2" fill="#f0f0f0"/></g>
</svg>
</body></html>
